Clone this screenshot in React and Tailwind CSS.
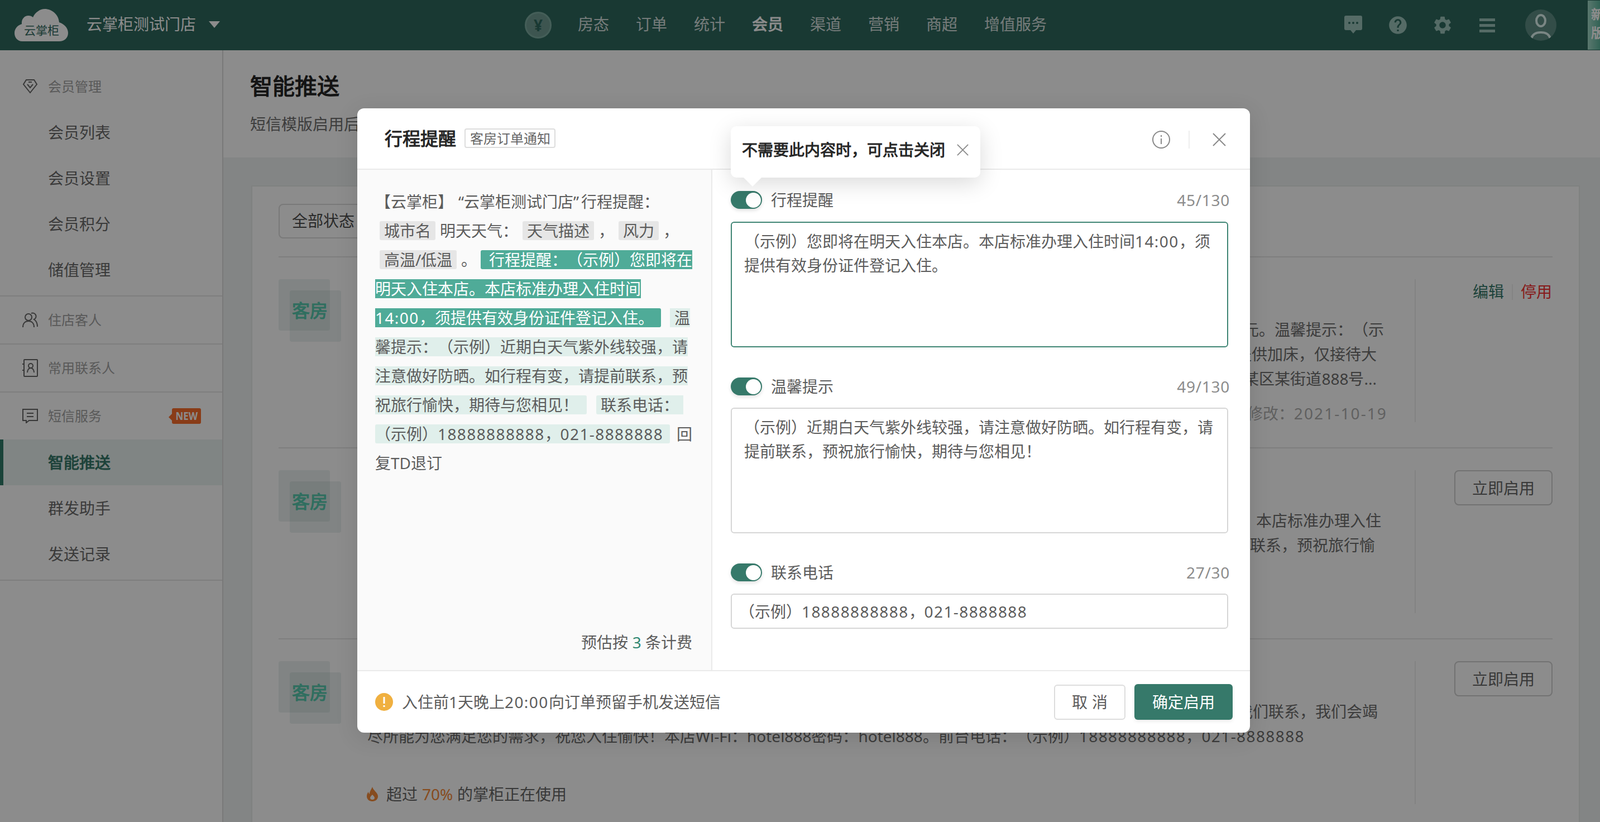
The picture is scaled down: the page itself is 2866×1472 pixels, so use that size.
import React from 'react';
import { MdHelp, MdSettings } from 'react-icons/md';

const navItems = ['房态', '订单', '统计', '会员', '渠道', '营销', '商超', '增值服务'];

const CloseIcon = ({ className }) => (
  <svg viewBox="0 0 24 24" className={className} fill="none" stroke="currentColor" strokeWidth="2">
    <path d="M1 1l22 22M23 1L1 23" />
  </svg>
);

const Num = ({ children }) => <span className="tracking-[1.4px]">{children}</span>;

const GrayChip = ({ children }) => (
  <span className="mx-2 inline-block h-[34px] rounded-[3px] bg-[#e6e6e6] px-2 leading-[34px]">{children}</span>
);

const Line = ({ children }) => (
  <div className="flex h-[52px] items-center whitespace-nowrap">{children}</div>
);

const SideItem = ({ label, active }) => (
  <div
    className={
      active
        ? 'flex h-[82px] items-center border-l-[6px] border-[#2f7a68] bg-[#e9f3f0] pl-[80px] text-[28px] font-bold text-[#36796a]'
        : 'flex h-[82px] items-center pl-[86px] text-[28px] text-[#6a6a6a]'
    }
  >
    {label}
  </div>
);

const SideGroup = ({ icon, label }) => (
  <div className="flex h-[86px] items-center border-b-2 border-[#e5e5e5] pl-[40px] text-[24px] text-[#a3a3a3]">
    <span className="flex w-[46px] shrink-0 items-center">{icon}</span>
    {label}
  </div>
);

const RoomBadge = () => (
  <div className="relative h-[112px] w-[112px] shrink-0">
    <div className="absolute left-0 top-0 h-[92px] w-[92px] rounded-[4px] bg-[#36796a]/10" />
    <div className="absolute bottom-0 right-0 h-[92px] w-[92px] rounded-[4px] bg-[#36796a]/10" />
    <div className="relative flex h-full items-center justify-center text-[32px] font-bold text-[#56c9ad]">客房</div>
  </div>
);

const EnableButton = () => (
  <button className="h-[63px] w-[176px] rounded-[8px] border-2 border-[#cfcfcf] text-[28px] text-[#666]">立即启用</button>
);

const Row = ({ lines, action, footer }) => (
  <div className="flex h-[342px] border-t-2 border-[#e5e5e5] pt-[39px]">
    <RoomBadge />
    <div className="ml-[41px] w-[1840px] shrink-0 text-[28px] leading-[44px] text-[#6e6e6e]">
      <div className="h-[68px]" />
      {lines.map((l, i) => (
        <div key={i} className={`whitespace-nowrap text-right ${l.pad}`}>
          {l.text}
        </div>
      ))}
      {footer}
    </div>
    <div className="ml-[42px] flex h-[256px] flex-1 justify-end border-l-2 border-[#eeeeee]">{action}</div>
  </div>
);

const Field = ({ label, count, children }) => (
  <div>
    <div className="flex h-[32px] items-center justify-between text-[28px]">
      <div className="flex items-center">
        <span className="flex h-[32px] w-[56px] items-center justify-end rounded-full bg-[#36796a] pr-[2px] shadow-[0_3px_6px_rgba(0,0,0,0.12)]">
          <span className="h-[27px] w-[27px] rounded-full bg-white" />
        </span>
        <span className="ml-[16px] text-[#5c5c5c]">{label}</span>
      </div>
      <span className="-mr-[3px] tracking-[0.7px] text-[#8c8c8c]">{count}</span>
    </div>
    {children}
  </div>
);

export default function App() {
  return (
    <div lang="zh-CN" className="relative h-[1472px] w-[2866px] overflow-hidden bg-white font-['Inter','Noto_Sans_CJK_SC',sans-serif] [text-spacing-trim:space-all]">
      <header className="flex h-[90px] items-center bg-[#2f695e] text-white">
        <div className="flex w-[940px] shrink-0 items-center pl-[26px]">
          <div className="relative h-[58px] w-[96px]">
            <svg viewBox="0 0 96 58" className="h-[58px] w-[96px]" fill="#ffffff">
              <path d="M14 58C5 58 0 51 0 43C0 35 6 29 13 27C12 18 18 12 25 12C28 12 31 13 33 15C37 6 46 0 54 0C67 0 79 10 80 24C89 27 96 34 96 43C96 52 89 58 80 58Z" />
            </svg>
            <span className="absolute left-[17px] top-[23px] whitespace-nowrap text-[21px] leading-[30px] text-[#2f695e]">云掌柜</span>
          </div>
          <span className="mb-[4px] ml-[33px] text-[28px]">云掌柜测试门店</span>
          <span className="mb-[3px] ml-[23px] h-0 w-0 border-x-[10px] border-t-[12px] border-x-transparent border-t-white" />
        </div>
        <div className="flex h-[48px] w-[48px] shrink-0 items-center justify-center rounded-full border-[3px] border-[#7daba0] bg-[#6f9c92] text-[28px] font-bold text-[#2f695e]">¥</div>
        <nav className="mb-[4px] ml-[47px] flex gap-[48px] text-[28px] font-medium text-white/80">
          {navItems.map((n) => (
            <span key={n} className={n === '会员' ? 'font-bold text-white' : ''}>{n}</span>
          ))}
        </nav>
        <div className="ml-auto flex items-center text-[#9cc3bb]">
          <svg viewBox="0 0 32 34" className="h-[34px] w-[32px]" fill="currentColor">
            <path d="M3 0h26a3 3 0 0 1 3 3v20a3 3 0 0 1-3 3h-8l-5 6-5-6H3a3 3 0 0 1-3-3V3a3 3 0 0 1 3-3z" />
            <circle cx="9" cy="13" r="2" fill="#2f695e" />
            <circle cx="16" cy="13" r="2" fill="#2f695e" />
            <circle cx="23" cy="13" r="2" fill="#2f695e" />
          </svg>
          <MdHelp className="ml-[45px] h-[38px] w-[38px] shrink-0" />
          <MdSettings className="ml-[42px] h-[38px] w-[38px] shrink-0" />
          <div className="ml-[47px] flex w-[28px] flex-col gap-[5px]">
            <span className="h-[5px] bg-current" />
            <span className="h-[5px] bg-current" />
            <span className="h-[5px] bg-current" />
          </div>
          <div className="ml-[54px] h-[56px] w-[56px] overflow-hidden rounded-full bg-[#5d8c83]">
            <svg viewBox="0 0 56 56" className="h-[56px] w-[56px]" fill="none" stroke="#def5f0" strokeWidth="4">
              <ellipse cx="28" cy="20" rx="8" ry="10" />
              <path d="M11 52c2-8 9-11 17-11s15 3 17 11" />
            </svg>
          </div>
          <div className="ml-[56px] h-[88px] w-[22px] self-start overflow-hidden bg-linear-to-r from-[#a3d9c8] to-[#5bb49c] pl-[6px] text-[23px] font-bold leading-[33px] text-white">
            <div className="w-[24px] pt-[8px]">新版</div>
          </div>
        </div>
      </header>

      <div className="flex h-[1382px]">
        <aside className="w-[400px] shrink-0 border-r-2 border-[#dcdcdc] bg-white">
          <div className="border-b-2 border-[#e5e5e5] pb-[5px] pt-[24px]">
            <div className="flex h-[82px] items-center pl-[40px] text-[24px] text-[#a3a3a3]">
              <span className="flex w-[46px] shrink-0 items-center">
                <svg viewBox="0 0 28 26" className="h-[26px] w-[28px]" fill="none" stroke="#666" strokeWidth="2">
                  <path d="M7 1h14l5 8-12 15L2 9z" />
                  <path d="M9 9l5 6 5-6M11 5h6" />
                </svg>
              </span>
              会员管理
            </div>
            {['会员列表', '会员设置', '会员积分', '储值管理'].map((s) => (
              <SideItem key={s} label={s} />
            ))}
          </div>
          <SideGroup
            label="住店客人"
            icon={
              <svg viewBox="0 0 28 28" className="h-[28px] w-[28px]" fill="none" stroke="#666" strokeWidth="2">
                <circle cx="11" cy="9" r="6" />
                <path d="M1 27c0-7 4-11 10-11s10 4 10 11M16 2a6 6 0 0 1 5 11c3 2 6 6 6 13" />
              </svg>
            }
          />
          <SideGroup
            label="常用联系人"
            icon={
              <svg viewBox="0 0 28 32" className="h-[32px] w-[28px]" fill="none" stroke="#666" strokeWidth="2">
                <rect x="3" y="1" width="24" height="30" rx="1" />
                <circle cx="15" cy="12" r="4" />
                <path d="M9 24c0-5 3-8 6-8s6 3 6 8M0 9h4M0 20h4" />
              </svg>
            }
          />
          <div className="flex h-[84px] items-center pl-[40px] text-[24px] text-[#a3a3a3]">
            <span className="flex w-[46px] shrink-0 items-center">
              <svg viewBox="0 0 28 26" className="h-[26px] w-[28px]" fill="none" stroke="#666" strokeWidth="2">
                <path d="M1 1h26v20H12l-5 4v-4H1z" />
                <path d="M8 8h12M8 14h12" />
              </svg>
            </span>
            短信服务
            <span className="relative ml-[126px] flex h-[28px] w-[52px] items-center justify-center rounded-[3px] bg-[#fa6e2c] text-[20px] font-bold text-white">
              <span className="absolute -left-[6px] top-[10px] h-0 w-0 border-y-[6px] border-r-[6px] border-y-transparent border-r-[#fa6e2c]" />
              <span className="inline-block origin-center scale-x-[0.85] font-['Liberation_Sans',sans-serif]">NEW</span>
            </span>
          </div>
          <div className="border-b-2 border-[#e5e5e5] pb-[5px]">
            <SideItem label="智能推送" active />
            <SideItem label="群发助手" />
            <SideItem label="发送记录" />
          </div>
        </aside>

        <main className="flex min-w-0 flex-1 flex-col bg-[#eef3f2]">
          <div className="h-[192px] shrink-0 bg-white pl-[48px] pt-[40px]">
            <h1 className="text-[40px] font-bold leading-[48px] text-[#262626]">智能推送</h1>
            <p className="mt-[22px] whitespace-nowrap text-[28px] leading-[44px] text-[#707070]">短信模版启用后，系统将按设置的时间自动向客人发送短信</p>
          </div>
          <div className="ml-[50px] mt-[50px] w-[2380px] flex-1 border-2 border-b-0 border-[#e8ebea] bg-white px-[47px] pt-[31px]">
            <div className="mb-[32px] flex h-[62px] w-[200px] items-center rounded-[8px] border-2 border-[#dddddd] pb-[2px] pl-[22px] text-[28px] text-[#4d4d4d]">全部状态</div>
            <Row
              lines={[
                { text: '【云掌柜】“云掌柜测试门店”入住提醒：尊敬的客人，您预订的房型已确认，房费合计888元。温馨提示：（示', pad: 'pr-[13px]' },
                { text: '例）本店入住时间14:00，退房时间12:00，如需续住请提前联系前台，本店不提供加床，仅接待大', pad: 'pr-[26px]' },
                { text: '陆籍成年客人入住，敬请谅解。酒店地址：某省某市某区某街道888号...', pad: 'pr-[26px]' },
                { text: <span className="text-[#b0b0b0]">最近修改：<span className="tracking-[2.1px]">2021-10-19</span></span>, pad: 'pr-[7px] mt-[18px]' },
              ]}
              action={
                <div className="flex items-start pt-[1px] text-[28px]">
                  <span className="text-[#36796a]">编辑</span>
                  <span className="mx-[14px] mt-[8px] h-[28px] w-[2px] bg-[#eeeeee]" />
                  <span className="mr-[1px] text-[#f53232]">停用</span>
                </div>
              }
            />
            <Row
              lines={[
                { text: '【云掌柜】“云掌柜测试门店”行程提醒：行程提醒：（示例）您即将在明天入住本店。本店标准办理入住', pad: 'pr-[18px]' },
                { text: '时间14:00，须提供有效身份证件登记入住。温馨提示：如行程有变，请提前联系，预祝旅行愉', pad: 'pr-[29px]' },
              ]}
              action={<EnableButton />}
            />
            <Row
              lines={[
                { text: '【云掌柜】欢迎您入住云掌柜测试门店，如您在入住期间有任何需要，请随时与我们联系，我们会竭', pad: 'pr-[24px]' },
                {
                  text: (
                    <>
                      尽所能为您满足您的需求，祝您入住愉快！本店Wi-Fi：hotel888密码：hotel888。前台电话：（示例）<Num>18888888888</Num>，<Num>021-8888888</Num>
                    </>
                  ),
                  pad: 'pr-[155px]',
                },
              ]}
              action={<EnableButton />}
              footer={
                <div className="mt-[60px] flex items-center pl-[5px] text-[#666]">
                  <svg viewBox="0 0 20 26" className="h-[26px] w-[20px]" fill="#f58a3a">
                    <path d="M10 0c1 4 3 5 5 8 3 3 5 6 5 9 0 5-4 9-10 9S0 22 0 17c0-3 1-6 3-8 0 2 1 3 2 4 0-5 3-8 5-13zm0 14c-2 2-4 4-4 6s2 3 4 3 4-1 4-3-2-4-4-6z" fillRule="evenodd" />
                  </svg>
                  <span className="ml-[15px]">超过</span>
                  <span className="mx-[8px] text-[#f58a3a]">70%</span>
                  <span>的掌柜正在使用</span>
                </div>
              }
            />
          </div>
        </main>
      </div>

      {/* dim layer and dialog */}
      <div className="absolute inset-0 bg-black/45" />
      <div className="absolute left-[640px] top-[194px] flex h-[1118px] w-[1599px] flex-col rounded-[12px] bg-white shadow-[0_8px_40px_rgba(0,0,0,0.12)]">
        <div className="flex h-[110px] shrink-0 items-center border-b-2 border-[#eaeaea] pb-[1px] pl-[49px]">
          <span className="text-[32px] font-bold text-[#262626]">行程提醒</span>
          <span className="ml-[15px] flex h-[35px] w-[163px] items-center justify-center rounded-[4px] border-2 border-[#dddddd] text-[24px] text-[#666]">客房订单通知</span>
          <div className="ml-auto mt-[4px] flex items-center pr-[43px] text-[#888]">
            <svg viewBox="0 0 32 32" className="h-[32px] w-[32px]" fill="none" stroke="currentColor" strokeWidth="2">
              <circle cx="16" cy="16" r="15" />
              <path d="M16 14v10M16 8v3" />
            </svg>
            <span className="ml-[33px] h-[32px] w-[2px] bg-[#eeeeee]" />
            <CloseIcon className="ml-[41px] h-[24px] w-[24px]" />
          </div>
        </div>

        <div className="flex min-h-0 flex-1">
          <div className="flex w-[636px] shrink-0 flex-col justify-between border-r-2 border-[#eaeaea] bg-[#fafafa] pb-[30px] pl-[32px] pr-[34px] pt-[31px] text-[28px] text-[#5c5c5c]">
            <div>
              <Line>
                <span>【云掌柜】</span>
                <span className="w-[19px] text-right">“</span>
                <span>云掌柜测试门店</span>
                <span className="w-[14px]">”</span>
                <span>行程提醒：</span>
              </Line>
              <Line>
                <GrayChip>城市名</GrayChip>
                <span>明天天气：</span>
                <GrayChip>天气描述</GrayChip>
                <span>，</span>
                <GrayChip>风力</GrayChip>
                <span>，</span>
              </Line>
              <Line>
                <GrayChip>高温/低温</GrayChip>
                <span>。</span>
                <span className="ml-[7px] inline-block h-[34px] w-[380px] rounded-l-[3px] bg-[#4fab98] pl-[15px] leading-[34px] text-white">行程提醒：（示例）您即将在</span>
              </Line>
              <Line>
                <span className="h-[34px] bg-[#4fab98] leading-[34px] text-white">明天入住本店。本店标准办理入住时间</span>
              </Line>
              <Line>
                <span className="h-[34px] w-[512px] rounded-r-[3px] bg-[#4fab98] leading-[34px] text-white"><Num>14:00</Num>，须提供有效身份证件登记入住。</span>
                <span className="ml-[16px] h-[34px] bg-[#e0efeb] pl-[8px] leading-[34px]">温</span>
              </Line>
              <Line>
                <span className="h-[34px] bg-[#e0efeb] leading-[34px]">馨提示：（示例）近期白天气紫外线较强，请</span>
              </Line>
              <Line>
                <span className="h-[34px] bg-[#e0efeb] leading-[34px]">注意做好防晒。如行程有变，请提前联系，预</span>
              </Line>
              <Line>
                <span className="h-[34px] w-[379px] rounded-r-[3px] bg-[#e0efeb] leading-[34px]">祝旅行愉快，期待与您相见！</span>
                <span className="ml-[17px] h-[34px] w-[156px] rounded-l-[3px] bg-[#e0efeb] pl-[8px] leading-[34px]">联系电话：</span>
              </Line>
              <Line>
                <span className="h-[34px] w-[531px] rounded-[3px] bg-[#e0efeb] leading-[34px]">（示例）<Num>18888888888</Num>，<Num>021-8888888</Num></span>
                <span className="ml-[12px]">回</span>
              </Line>
              <Line>复TD退订</Line>
            </div>
            <div className="text-right leading-[40px]">
              预估按 <span className="text-[#2e8770]">3</span> 条计费
            </div>
          </div>

          <div className="flex flex-1 flex-col gap-[54px] pl-[33px] pr-[39px] pt-[38px] text-[28px] text-[#5c5c5c]">
            <Field label="行程提醒" count="45/130">
              <div className="mt-[23px] h-[225px] rounded-[6px] border-2 border-[#3f8574] px-[22px] pt-[12px] leading-[43px]">
                （示例）您即将在明天入住本店。本店标准办理入住时间<Num>14:00</Num>，须提供有效身份证件登记入住。
              </div>
            </Field>
            <Field label="温馨提示" count="49/130">
              <div className="mt-[22px] h-[225px] rounded-[6px] border-2 border-[#d6d6d6] px-[22px] pt-[12px] leading-[43px]">
                （示例）近期白天气紫外线较强，请注意做好防晒。如行程有变，请提前联系，预祝旅行愉快，期待与您相见！
              </div>
            </Field>
            <Field label="联系电话" count="27/30">
              <div className="mt-[22px] flex h-[63px] items-center rounded-[6px] border-2 border-[#d6d6d6] pl-[13px]">
                <span>（示例）<Num>18888888888</Num>，<Num>021-8888888</Num></span>
              </div>
            </Field>
          </div>
        </div>

        <div className="flex h-[112px] shrink-0 items-center border-t-2 border-[#eaeaea] pl-[32px] pr-[31px] text-[28px] text-[#5c5c5c]">
          <svg viewBox="0 0 32 32" className="h-[32px] w-[32px]">
            <circle cx="16" cy="16" r="16" fill="#f0b040" />
            <path d="M16 7v12M16 22v3" stroke="#fff" strokeWidth="3" />
          </svg>
          <span className="ml-[16px]">入住前1天晚上<Num>20:00</Num>向订单预留手机发送短信</span>
          <button className="ml-auto h-[63px] w-[128px] rounded-[6px] border-2 border-[#dddddd] bg-white text-[#5c5c5c]">取 消</button>
          <button className="ml-[16px] h-[64px] w-[176px] rounded-[6px] bg-[#36796a] text-white shadow-[0_3px_6px_rgba(0,0,0,0.08)]">确定启用</button>
        </div>

        {/* first-use hint above the switch */}
        <div className="absolute left-[669px] top-[32px] h-[92px] w-[447px] rounded-[10px] bg-white pl-[20px] pt-[22px] shadow-[0_10px_40px_rgba(0,0,0,0.15)]">
          <div className="flex items-center leading-[40px]">
            <span className="text-[28px] font-bold text-[#262626]">不需要此内容时，可点击关闭</span>
            <CloseIcon className="ml-[21px] h-[21px] w-[21px] text-[#888]" />
          </div>
          <span className="absolute left-[23px] top-[92px] h-0 w-0 border-x-[16px] border-t-[16px] border-x-transparent border-t-white" />
        </div>
      </div>
    </div>
  );
}
